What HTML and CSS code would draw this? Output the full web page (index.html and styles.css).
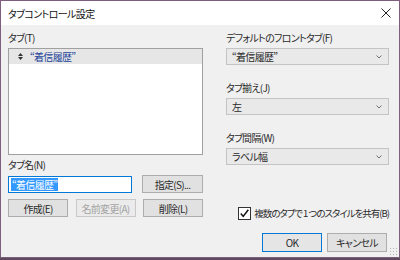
FILE: index.html
```html
<!DOCTYPE html>
<html lang="ja">
<head>
<meta charset="utf-8">
<link rel="stylesheet" href="styles.css">
</head>
<body>
<div class="window">
  <div class="titlebar">
    <span class="title">タブコントロール設定</span>
    <svg class="close" width="10" height="10" viewBox="0 0 10 10"><path d="M0.5 0.5 L9.5 9.5 M9.5 0.5 L0.5 9.5" stroke="#222" stroke-width="1" fill="none"/></svg>
  </div>
  <div class="content">
    <div class="left">
      <div class="label">タブ(T)</div>
      <div class="listbox">
        <div class="listrow">
          <svg class="sort" width="5" height="7" viewBox="0 0 5 7"><path d="M2.5 0 L5 3 L0 3 Z M0 4 L5 4 L2.5 7 Z" fill="#333"/></svg>
          <span class="listtext">“着信履歴”</span>
        </div>
      </div>
      <div class="label label-gap">タブ名(N)</div>
      <div class="row row-input">
        <div class="input"><span class="sel">“着信履歴”</span></div>
        <div class="btn btn-spec">指定(S)...</div>
      </div>
      <div class="row row-btns">
        <div class="btn">作成(E)</div>
        <div class="btn disabled">名前変更(A)</div>
        <div class="btn">削除(L)</div>
      </div>
    </div>
    <div class="right">
      <div class="label">デフォルトのフロントタブ(F)</div>
      <div class="combo"><span>“着信履歴”</span><svg class="arrow" width="6" height="4" viewBox="0 0 6 4"><path d="M0.5 0.5 L3 3 L5.5 0.5" stroke="#707070" stroke-width="1" fill="none"/></svg></div>
      <div class="label label-gap2">タブ揃え(J)</div>
      <div class="combo"><span>左</span><svg class="arrow" width="6" height="4" viewBox="0 0 6 4"><path d="M0.5 0.5 L3 3 L5.5 0.5" stroke="#707070" stroke-width="1" fill="none"/></svg></div>
      <div class="label label-gap2">タブ間隔(W)</div>
      <div class="combo"><span>ラベル幅</span><svg class="arrow" width="6" height="4" viewBox="0 0 6 4"><path d="M0.5 0.5 L3 3 L5.5 0.5" stroke="#707070" stroke-width="1" fill="none"/></svg></div>
      <div class="checkrow">
        <span class="checkbox"><svg width="11" height="11" viewBox="0 0 11 11"><path d="M1.8 5.6 L4.2 8.4 L9.3 1.8" stroke="#111" stroke-width="1.5" fill="none"/></svg></span>
        <span class="checklabel">複数のタブで 1 つのスタイルを共有(B)</span>
      </div>
      <div class="row row-ok">
        <div class="btn default">OK</div>
        <div class="btn">キャンセル</div>
      </div>
    </div>
  </div>
  <div class="grip"></div>
</div>
</body>
</html>
```
FILE: styles.css
```css
html, body {
  margin: 0;
  padding: 0;
  background: #5e4a5e;
}
.window {
  position: relative;
  box-sizing: border-box;
  width: 400px;
  height: 258px;
  border: 1px solid #7d5e7d;
  background: #f0f0f0;
  font-family: "Noto Sans CJK JP", "Noto Sans", sans-serif;
  font-size: 10px;
  letter-spacing: -0.7px;
  font-feature-settings: "palt";
  color: #2a2a2a;
  display: flex;
  flex-direction: column;
}
.titlebar {
  height: 24px;
  background: #ffffff;
  display: flex;
  align-items: center;
  justify-content: space-between;
  padding: 0 8px 0 7px;
  flex-shrink: 0;
}
.title {
  color: #111;
  letter-spacing: -0.6px;
}
.content {
  display: grid;
  grid-template-columns: 195px 163px;
  column-gap: 23px;
  padding: 5px 0 0 7px;
}
.left, .right {
  display: flex;
  flex-direction: column;
}
.label {
  height: 16px;
  line-height: 16px;
  margin-bottom: 2px;
  white-space: nowrap;
}
.label-gap {
  margin-top: 2px;
}
.label-gap2 {
  margin-top: 15px;
}
.listbox {
  box-sizing: border-box;
  height: 107px;
  border: 1px solid #a0a0a0;
  background: #ffffff;
}
.listrow {
  height: 15px;
  background: #e6e6e6;
  display: flex;
  align-items: center;
  padding-left: 9px;
}
.sort {
  margin-right: 7px;
}
.listtext {
  color: #24439a;
}
.row {
  display: flex;
  align-items: center;
}
.row-input {
  justify-content: space-between;
}
.input {
  box-sizing: border-box;
  width: 124px;
  height: 17px;
  border: 1px solid #0078d7;
  background: #fff;
  display: flex;
  align-items: center;
  padding-left: 2px;
}
.sel {
  background: #3399ff;
  color: #fff;
  line-height: 13px;
  padding: 0 1px;
}
.btn {
  box-sizing: border-box;
  height: 18px;
  width: 61px;
  border: 1px solid #adadad;
  background: #e1e1e1;
  display: flex;
  align-items: center;
  justify-content: center;
  white-space: nowrap;
}
.row-btns {
  margin-top: 6px;
  justify-content: space-between;
}
.row-btns .btn {
  width: 60px;
}
.disabled {
  background: #ebebeb;
  border-color: #c8c8c8;
  color: #a3a3a3;
}
.combo {
  box-sizing: border-box;
  height: 17px;
  border: 1px solid #c4c4c4;
  background: #e9e9e9;
  display: flex;
  align-items: center;
  justify-content: space-between;
  padding: 0 6px 0 5px;
}
.arrow {
  display: block;
}
.checkrow {
  margin-top: 41px;
  height: 14px;
  display: flex;
  align-items: center;
  justify-content: flex-end;
  white-space: nowrap;
}
.checkbox {
  box-sizing: border-box;
  width: 13px;
  height: 13px;
  border: 1px solid #333;
  background: #fff;
  display: flex;
  align-items: center;
  justify-content: center;
  margin-right: 3px;
}
.checkbox svg {
  display: block;
}
.checklabel {
  font-size: 9.5px;
  letter-spacing: -1px;
  white-space: pre;
}
.row-ok {
  margin-top: 13px;
  justify-content: flex-end;
  gap: 5px;
  padding-right: 2px;
}
.row-ok .btn {
  width: 60px;
  height: 19px;
}
.default {
  border-color: #0078d7;
  background: #e5e5e5;
}
.grip {
  position: absolute;
  right: 2px;
  bottom: 2px;
  width: 8px;
  height: 8px;
  background-image: radial-gradient(circle, #b5b5b5 0.8px, transparent 1px);
  background-size: 3px 3px;
}
```
